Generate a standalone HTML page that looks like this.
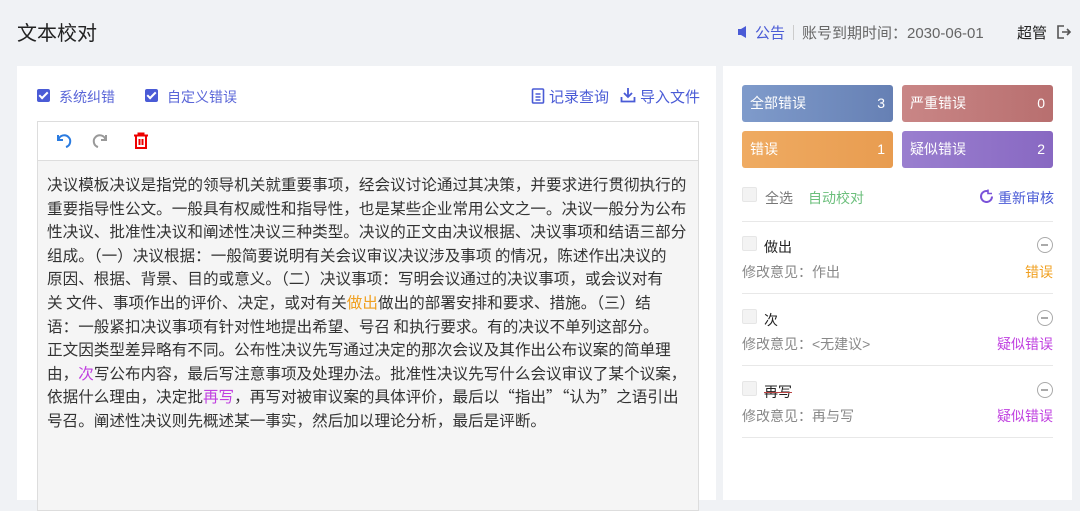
<!DOCTYPE html>
<html><head><meta charset="utf-8"><style>
*{margin:0;padding:0;box-sizing:border-box}
body{width:1080px;height:500px;overflow:hidden;background:#f0f2f5;font-family:"Liberation Sans","Noto Sans CJK SC",sans-serif;color:#333;position:relative}
.a{position:absolute;white-space:nowrap}
.cb{position:absolute;width:13px;height:13px;background:#4a5bd6;border-radius:2px}
.cb:after{content:"";position:absolute;left:4px;top:1px;width:3px;height:7px;border:solid #fff;border-width:0 2px 2px 0;transform:rotate(45deg)}
.ub{position:absolute;width:15px;height:15px;background:#f3f3f3;border:1px solid #e6e6e6;border-radius:2px}
.card{position:absolute;width:151px;height:37px;border-radius:3px;color:#fff;font-size:14px;line-height:37px;padding:0 8px}
.card span{float:right}
.txt{position:absolute;left:47px;font-family:"Noto Sans CJK SC",sans-serif;font-size:15.6px;line-height:23.6px;color:#333;white-space:nowrap}
.hr{position:absolute;left:742px;width:311px;height:1px;background:#e8e8e8}
.minus{position:absolute;width:16px;height:16px;border:1.5px solid #aaa;border-radius:50%}
.minus:after{content:"";position:absolute;left:3px;top:6px;width:7px;height:1.5px;background:#aaa}
</style></head><body>
<div class="a" style="left:17px;top:17px;font-size:20px;color:#222">文本校对</div>
<svg class="a" style="left:737px;top:25px" width="14" height="14" viewBox="0 0 14 14"><path d="M1 4h3l5-3v12l-5-3H1z" fill="#4a5bd6"/></svg>
<div class="a" style="left:755px;top:22px;font-size:15px;color:#4a5bd6">公告</div>
<div class="a" style="left:793px;top:25px;width:1px;height:15px;background:#ccc"></div>
<div class="a" style="left:802px;top:22px;font-size:15px;color:#666">账号到期时间：2030-06-01</div>
<div class="a" style="left:1017px;top:22px;font-size:15px;color:#222">超管</div>
<svg class="a" style="left:1056px;top:24px" width="16" height="16" viewBox="0 0 16 16" fill="none" stroke="#555" stroke-width="1.6"><path d="M8 2H2v12h6M6 8h8M11 5l3 3-3 3"/></svg>

<div class="a" style="left:17px;top:66px;width:699px;height:434px;background:#fff"></div>
<div class="cb" style="left:37px;top:89px"></div>
<div class="a" style="left:59px;top:87px;font-size:14px;color:#5a66d8">系统纠错</div>
<div class="cb" style="left:145px;top:89px"></div>
<div class="a" style="left:167px;top:87px;font-size:14px;color:#5a66d8">自定义错误</div>
<svg class="a" style="left:531px;top:88px" width="14" height="16" viewBox="0 0 14 16" fill="none" stroke="#4a5bd6" stroke-width="1.6"><rect x="1.5" y="1" width="11" height="14" rx="1"/><path d="M4.5 6h5M4.5 9h5M4.5 12h5"/></svg>
<div class="a" style="left:549px;top:86px;font-size:15px;color:#4a5bd6">记录查询</div>
<svg class="a" style="left:620px;top:87px" width="16" height="16" viewBox="0 0 16 16" fill="none" stroke="#4a5bd6" stroke-width="1.8"><path d="M8 1v9M4 6l4 4 4-4M1.5 10v4.5h13V10"/></svg>
<div class="a" style="left:640px;top:86px;font-size:15px;color:#4a5bd6">导入文件</div>

<div class="a" style="left:37px;top:121px;width:662px;height:390px;border:1px solid #ddd;background:#f5f5f5"></div>
<div class="a" style="left:38px;top:122px;width:660px;height:39px;background:#fff;border-bottom:1px solid #ddd"></div>
<svg class="a" style="left:54px;top:133px" width="18" height="16" viewBox="0 0 18 16" fill="none" stroke="#2a7be0" stroke-width="2"><path d="M4 2v5h5"/><path d="M4.5 6.5A6 6 0 1 1 12 14"/></svg>
<svg class="a" style="left:92px;top:133px" width="18" height="16" viewBox="0 0 18 16" fill="none" stroke="#999" stroke-width="2"><path d="M14 2v5H9"/><path d="M13.5 6.5A6 6 0 1 0 6 14"/></svg>
<svg class="a" style="left:133px;top:132px" width="16" height="17" viewBox="0 0 16 17" fill="none" stroke="#e00" stroke-width="2"><path d="M1 3.5h14M5.5 3.5V1.5h5v2M3 4v12h10V4M6.5 7v6M9.5 7v6"/></svg>

<div class="txt" style="top:173px">决议模板决议是指党的领导机关就重要事项，经会议讨论通过其决策，并要求进行贯彻执行的<br>重要指导性公文。一般具有权威性和指导性，也是某些企业常用公文之一。决议一般分为公布<br>性决议、批准性决议和阐述性决议三种类型。决议的正文由决议根据、决议事项和结语三部分<br>组成。（一）决议根据：一般简要说明有关会议审议决议涉及事项 的情况，陈述作出决议的<br>原因、根据、背景、目的或意义。（二）决议事项：写明会议通过的决议事项，或会议对有<br>关 文件、事项作出的评价、决定，或对有关<span style="color:#f0a020">做出</span>做出的部署安排和要求、措施。（三）结<br>语：一般紧扣决议事项有针对性地提出希望、号召 和执行要求。有的决议不单列这部分。<br>正文因类型差异略有不同。公布性决议先写通过决定的那次会议及其作出公布议案的简单理<br>由，<span style="color:#c040e0">次</span>写公布内容，最后写注意事项及处理办法。批准性决议先写什么会议审议了某个议案，<br>依据什么理由，决定批<span style="color:#c040e0">再写</span>，再写对被审议案的具体评价，最后以“指出”“认为”之语引出<br>号召。阐述性决议则先概述某一事实，然后加以理论分析，最后是评断。</div>

<div class="a" style="left:723px;top:66px;width:349px;height:434px;background:#fff"></div>
<div class="card" style="left:742px;top:85px;background:linear-gradient(90deg,#7f9bcb,#6680b4)">全部错误<span>3</span></div>
<div class="card" style="left:902px;top:85px;background:linear-gradient(90deg,#c98686,#b86f6f)">严重错误<span>0</span></div>
<div class="card" style="left:742px;top:131px;background:linear-gradient(90deg,#efab62,#e89c50)">错误<span>1</span></div>
<div class="card" style="left:902px;top:131px;background:linear-gradient(90deg,#9a7fcf,#8868c2)">疑似错误<span>2</span></div>

<div class="ub" style="left:742px;top:187px"></div>
<div class="a" style="left:765px;top:188px;font-size:14px;color:#777">全选</div>
<div class="a" style="left:808px;top:188px;font-size:14px;color:#6cbf7c">自动校对</div>
<svg class="a" style="left:979px;top:189px" width="15" height="15" viewBox="0 0 15 15" fill="none" stroke="#7a52d8" stroke-width="2"><path d="M13 7.5A5.5 5.5 0 1 1 9 2.2"/><path d="M9 0.5v4h4" stroke-width="1.6"/></svg>
<div class="a" style="left:998px;top:188px;font-size:14px;color:#4a5bd6">重新审核</div>
<div class="hr" style="top:221px"></div>

<div class="ub" style="left:742px;top:236px"></div>
<div class="a" style="left:764px;top:237px;font-size:14px;color:#222">做出</div>
<div class="minus" style="left:1037px;top:237px"></div>
<div class="a" style="left:742px;top:262px;font-size:14px;color:#888">修改意见：作出</div>
<div class="a" style="left:1025px;top:262px;font-size:14px;color:#f0a020">错误</div>
<div class="hr" style="top:293px"></div>

<div class="ub" style="left:742px;top:309px"></div>
<div class="a" style="left:764px;top:310px;font-size:14px;color:#222">次</div>
<div class="minus" style="left:1037px;top:310px"></div>
<div class="a" style="left:742px;top:334px;font-size:14px;color:#888">修改意见：&lt;无建议&gt;</div>
<div class="a" style="left:997px;top:334px;font-size:14px;color:#c040e0">疑似错误</div>
<div class="hr" style="top:365px"></div>

<div class="ub" style="left:742px;top:381px"></div>
<div class="a" style="left:764px;top:382px;font-size:14px;color:#222;text-decoration:line-through;text-decoration-color:#b44">再写</div>
<div class="minus" style="left:1037px;top:382px"></div>
<div class="a" style="left:742px;top:406px;font-size:14px;color:#888">修改意见：再与写</div>
<div class="a" style="left:997px;top:406px;font-size:14px;color:#c040e0">疑似错误</div>
<div class="hr" style="top:437px"></div>
</body></html>
